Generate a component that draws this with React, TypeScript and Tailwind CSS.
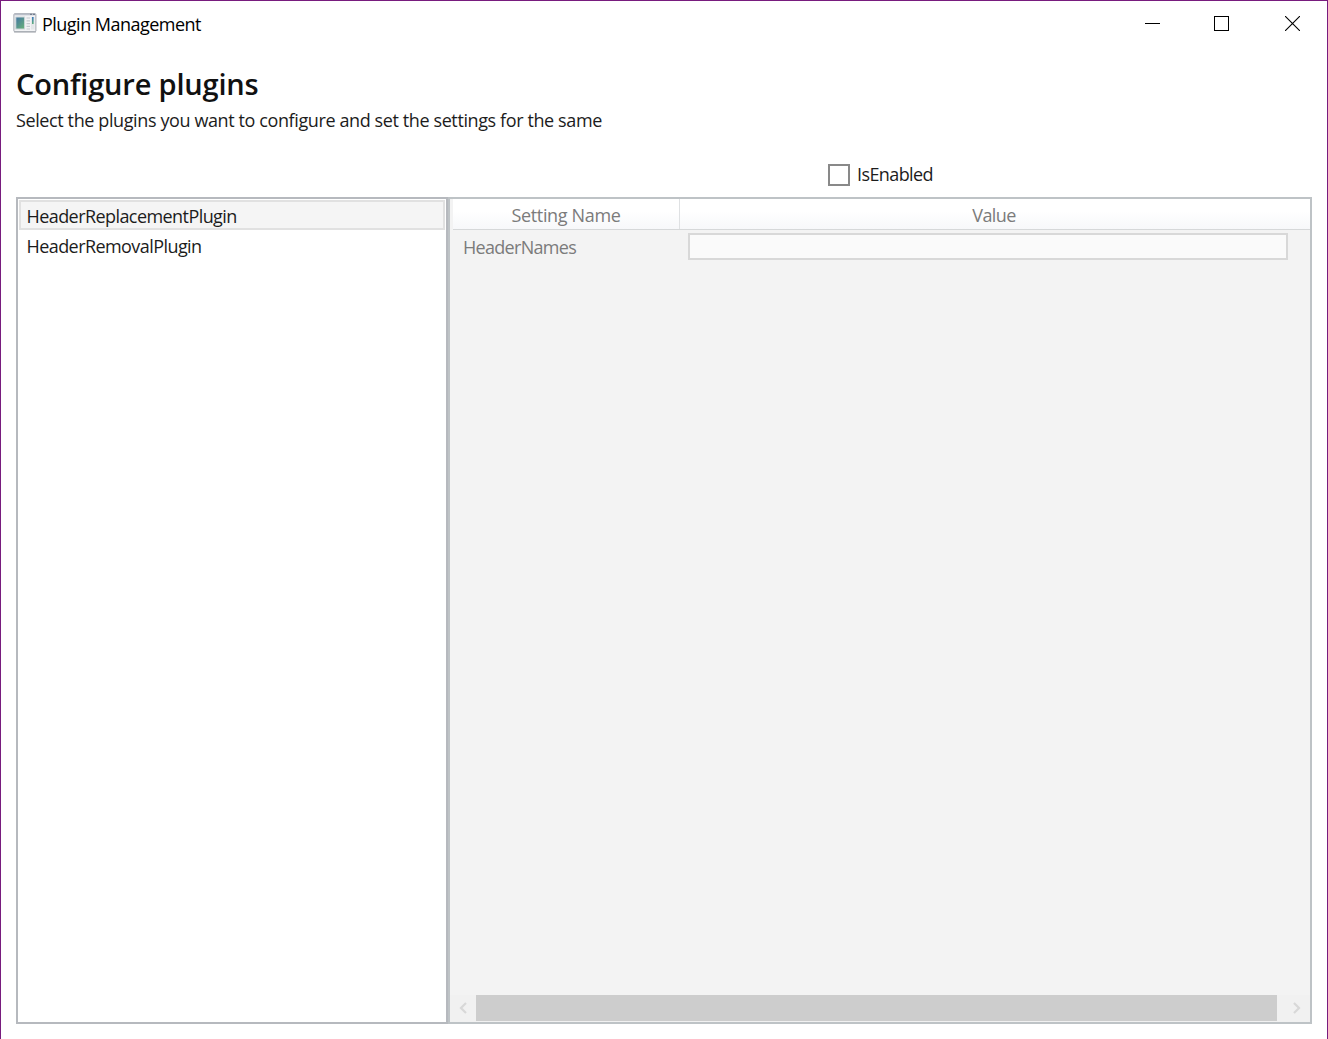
import React from "react";

const plugins = ["HeaderReplacementPlugin", "HeaderRemovalPlugin"];

function AppIcon() {
  return (
    <svg width="24" height="21" viewBox="0 0 24 21" className="block">
      <defs>
        <linearGradient id="pane" x1="0" y1="0" x2="0.8" y2="1">
          <stop offset="0" stopColor="#4275a5" />
          <stop offset="1" stopColor="#66ad7b" />
        </linearGradient>
        <linearGradient id="bar" x1="0" y1="0" x2="0" y2="1">
          <stop offset="0" stopColor="#3978c0" />
          <stop offset="1" stopColor="#60b078" />
        </linearGradient>
      </defs>
      <rect x="0.9" y="0.7" width="22" height="18" rx="1" fill="#f2f3f5" stroke="#a0a5ad" />
      <path d="M1 1.5h21.5" stroke="#b9bec8" strokeWidth="1.6" />
      <path d="M17 1.3h2M20 1.3h2" stroke="#657084" />
      <path d="M1 19h22" stroke="#a7aab0" />
      <rect x="2.8" y="4" width="8.8" height="12" fill="url(#pane)" stroke="#cdd5d8" />
      <path d="M13.5 5h3.5M13.5 7.8h3.5M13.5 10.6h3.5M13.5 13.4h3.5M13.5 16h3.5" stroke="#c5c9cf" strokeWidth="1.2" />
      <rect x="18" y="4" width="3.5" height="12.5" fill="#e3e6e8" />
      <rect x="19" y="4" width="1.6" height="7" fill="url(#bar)" />
    </svg>
  );
}

function TitleBar() {
  return (
    <header className="flex h-[46px] shrink-0 items-start pl-3">
      <div className="pt-3"><AppIcon /></div>
      <span className="ml-[5px] mt-[11px] text-[18px] leading-6 tracking-[-0.52px] text-black">Plugin Management</span>
      <div className="ml-auto mr-[27px] mt-[15px] flex items-start">
        <svg width="15" height="15" className="mr-[54px]" shapeRendering="crispEdges"><path d="M0 7.5h15" stroke="black" /></svg>
        <svg width="15" height="15" className="mr-[56px]" shapeRendering="crispEdges"><rect x="0.5" y="0.5" width="14" height="14" fill="none" stroke="black" /></svg>
        <svg width="15" height="15"><path d="M0 0l15 15M15 0L0 15" stroke="black" strokeWidth="1.1" /></svg>
      </div>
    </header>
  );
}

function PluginList() {
  return (
    <div className="w-[432px] shrink-0 border-2 border-[#b6b9be] bg-white px-px pt-px">
      {plugins.map((name, index) => (
        <div
          key={name}
          className={
            index === 0
              ? "flex h-[30px] items-center border-2 border-[#e1e1e1] bg-[#f5f5f5] pl-[5.5px] pt-[3px]"
              : "flex h-[31px] items-center pl-[7.5px] pt-0.5"
          }
        >
          <span className="tracking-[-0.57px]">{name}</span>
        </div>
      ))}
    </div>
  );
}

function SettingsGrid() {
  return (
    <div className="flex min-w-0 flex-1 flex-col border-2 border-[#bec3c6] bg-[#f3f3f3] text-[#7b7b7b]">
      <div className="ml-[3px] flex h-[31px] shrink-0 border-b border-[#d6d8d9] bg-gradient-to-b from-white from-40% to-[#f7f8fa]">
        <div className="flex w-[227px] items-center justify-center border-r border-[#dfe1e3] pt-0.5">
          <span className="tracking-[-0.35px]">Setting Name</span>
        </div>
        <div className="flex flex-1 items-center justify-center pr-0.5 pt-0.5">
          <span className="tracking-[-0.6px]">Value</span>
        </div>
      </div>
      <div className="flex h-[34px] shrink-0 items-start pl-[13px] pt-[3px]">
        <span className="w-[225px] pt-[2px] leading-6 tracking-[-0.7px]">HeaderNames</span>
        <div className="h-[27px] w-[600px] border-2 border-[#d8d8d8] bg-[#fafafa]" />
      </div>
      <div className="mt-auto flex h-[27px] shrink-0 items-stretch bg-[#f1f1f1]">
        <div className="flex w-[26px] items-center justify-center pb-0.5">
          <svg width="9" height="12"><path d="M7 1L2 6l5 5" fill="none" stroke="#d8d8d8" strokeWidth="2.2" /></svg>
        </div>
        <div className="mb-px flex-1 bg-[#cdcdcd]" />
        <div className="flex w-[33px] items-center justify-center pb-0.5 pl-1.5">
          <svg width="9" height="12"><path d="M2 1l5 5-5 5" fill="none" stroke="#d8d8d8" strokeWidth="2.2" /></svg>
        </div>
      </div>
    </div>
  );
}

export default function App() {
  return (
    <div className="flex h-[1039px] w-[1328px] flex-col overflow-hidden border-x border-t border-[#781c7e] bg-white font-['Open_Sans',sans-serif] text-[18px] text-[#1c1c1c]">
      <TitleBar />
      <main className="flex flex-1 flex-col px-[15px] pb-[15px]">
        <h1 className="mt-[17px] h-10 text-[29px] font-semibold leading-10 tracking-[-0.18px] text-[#111]">
          <span>Configure plugins</span>
        </h1>
        <p className="mt-1 h-6 leading-6 tracking-[-0.39px]">
          <span>Select the plugins you want to configure and set the settings for the same</span>
        </p>
        <div className="mt-8 flex h-[22px] items-center pl-[812px]">
          <div className="size-[22px] border-2 border-[#898989] bg-white" />
          <span className="ml-[7px] pb-0.5 tracking-[-0.6px]">IsEnabled</span>
        </div>
        <div className="mt-[11px] flex min-h-0 flex-1">
          <PluginList />
          <SettingsGrid />
        </div>
      </main>
    </div>
  );
}
